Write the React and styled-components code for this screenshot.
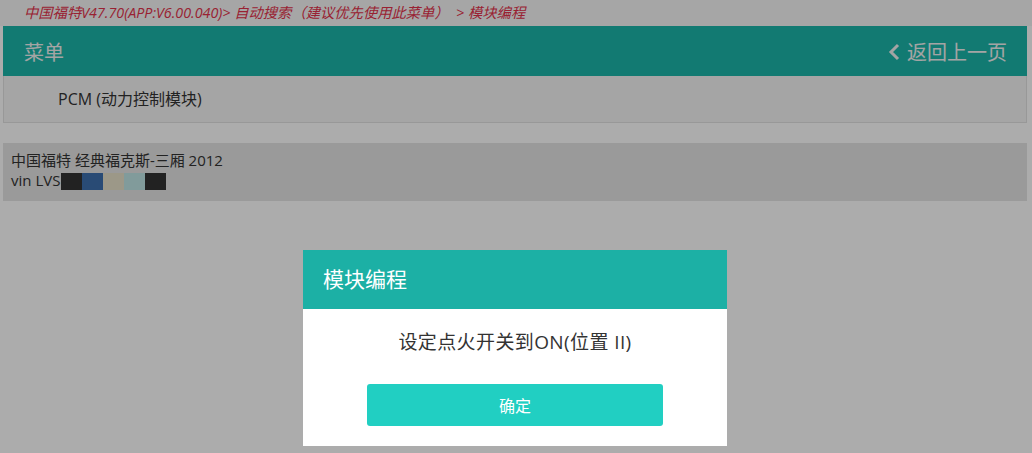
import React from 'react';
import styled, { createGlobalStyle } from 'styled-components';

const GlobalStyle = createGlobalStyle`
    html, body {
        margin: 0;
        padding: 0;
        background: #ffffff;
        font-family: "Open Sans", "Noto Sans CJK SC", sans-serif;
    }
`;

const vinBlocks = ['#333333', '#3d6fae', '#e8e2ca', '#c0e6e6', '#333333'];

const App = () => {
  return (
    <>
      <GlobalStyle />
      <Page>
        <Breadcrumb>中国福特V47.70(APP:V6.00.040)&gt; 自动搜索（建议优先使用此菜单）&nbsp; &gt; 模块编程</Breadcrumb>
        <Header>
          <HeaderTitle>菜单</HeaderTitle>
          <BackLink>
            <svg width="14" height="20" viewBox="0 0 14 20">
              <path d="M10 3 L3 10 L10 17" fill="none" stroke="currentColor" strokeWidth="3" />
            </svg>
            返回上一页
          </BackLink>
        </Header>
        <MenuRow>PCM (动力控制模块)</MenuRow>
        <InfoBox>
          <InfoLine>中国福特 经典福克斯-三厢 2012</InfoLine>
          <InfoLine>
            vin LVS
            <VinMask>
              {vinBlocks.map((c, i) => (
                <VinBlock key={i} $color={c} />
              ))}
            </VinMask>
          </InfoLine>
        </InfoBox>
      </Page>
      <Overlay>
        <Dialog>
          <DialogHeader>模块编程</DialogHeader>
          <DialogBody>
            <Message>设定点火开关到ON(位置 II)</Message>
            <ConfirmBtn>确定</ConfirmBtn>
          </DialogBody>
        </Dialog>
      </Overlay>
    </>
  );
};

const Page = styled.div`
    display: flex;
    flex-direction: column;
    padding: 0 5px 0 3px;
    min-height: 453px;
    box-sizing: border-box;
`;

const Breadcrumb = styled.div`
    height: 26px;
    margin: 0 -5px 0 -3px;
    padding-left: 24px;
    background: #f6f6f6;
    color: #e3324c;
    font-style: italic;
    font-size: 14.3px;
    line-height: 26px;
    white-space: nowrap;
`;

const Header = styled.div`
    display: flex;
    align-items: center;
    justify-content: space-between;
    height: 50px;
    padding: 0 20px 0 21px;
    background: #1cb6aa;
    color: #f4f4f4;
`;

const HeaderTitle = styled.span`
    font-size: 20px;
`;

const BackLink = styled.span`
    display: flex;
    align-items: center;
    gap: 5px;
    font-size: 20px;

    svg {
        margin-top: 1px;
    }
`;

const MenuRow = styled.div`
    height: 46px;
    padding-left: 54px;
    border: 1px solid #e2e2e2;
    border-top: none;
    background: #f5f5f5;
    color: #333333;
    font-size: 16px;
    line-height: 46px;
`;

const InfoBox = styled.div`
    margin-top: 20px;
    height: 58px;
    padding: 7px 8px 0;
    box-sizing: border-box;
    background: #e4e4e4;
    color: #333333;
    font-size: 15px;
`;

const InfoLine = styled.div`
    display: flex;
    align-items: center;
    height: 20px;
    line-height: 20px;
`;

const VinMask = styled.span`
    display: flex;
    margin-left: 1px;
    margin-top: 2px;
`;

const VinBlock = styled.span`
    width: 21px;
    height: 17px;
    background: ${(p) => p.$color};
`;

const Overlay = styled.div`
    position: fixed;
    inset: 0;
    background: rgba(0, 0, 0, 0.325);
`;

const Dialog = styled.div`
    position: absolute;
    left: 303px;
    top: 250px;
    width: 424px;
    background: #ffffff;
`;

const DialogHeader = styled.div`
    height: 59px;
    padding-left: 20px;
    background: #1cb0a5;
    color: #ffffff;
    font-size: 21px;
    line-height: 59px;
`;

const DialogBody = styled.div`
    display: flex;
    flex-direction: column;
    align-items: center;
    padding: 18px 0 20px;
`;

const Message = styled.div`
    color: #333333;
    font-size: 19px;
    letter-spacing: 0.4px;
    line-height: 30px;
`;

const ConfirmBtn = styled.button`
    margin-top: 27px;
    width: 296px;
    height: 42px;
    border: none;
    border-radius: 3px;
    background: #21cfc2;
    color: #ffffff;
    font-family: inherit;
    font-size: 16px;
`;

export default App;
